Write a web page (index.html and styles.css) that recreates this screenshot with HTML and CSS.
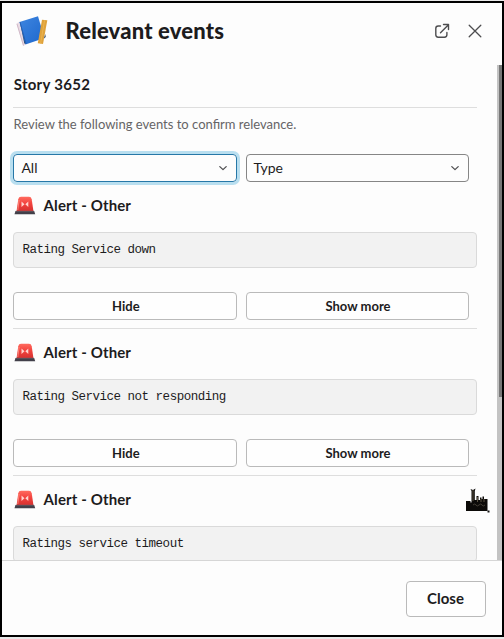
FILE: index.html
```html
<!DOCTYPE html>
<html lang="en">
<head>
<meta charset="utf-8">
<title>Relevant events</title>
<link rel="stylesheet" href="styles.css">
</head>
<body>
<svg class="defs" aria-hidden="true">
  <defs>
    <linearGradient id="lamp" x1="0" y1="0" x2="0" y2="1"><stop offset="0" stop-color="#ff6b5f"/><stop offset=".45" stop-color="#f3433e"/><stop offset="1" stop-color="#d5302f"/></linearGradient>
    <linearGradient id="book" x1="0" y1="0" x2="1" y2="1"><stop offset="0" stop-color="#3f86e0"/><stop offset="1" stop-color="#1c66cc"/></linearGradient>
    <symbol id="siren" viewBox="0 0 22 19">
      <path d="M2.500 15.500 4.300 3.200Q4.700 .8 7 .8H15Q17.200 .8 17.700 3.200L19.500 15.500Z" fill="url(#lamp)"/>
      <path d="M5.100 4 3.800 14" stroke="#ff9388" stroke-width=".8"/>
      <path d="M7.500 5.500 10.500 8.200 7.500 11ZM14.300 5.500 11.300 8.200 14.300 11Z" fill="#ffd5cf"/>
      <path d="M1.500 15H20.200L21.200 18.300H.5Z" fill="#42404a"/>
      <path d="M1.800 15.200H20" stroke="#77616a" stroke-width=".7"/>
    </symbol>
    <symbol id="chevron" viewBox="0 0 10 7"><path d="m1.800 1.600 3.200 3 3.200-3" fill="none" stroke="#4f4f51" stroke-width="1.300" stroke-linecap="round" stroke-linejoin="round"/></symbol>
  </defs>
</svg>
<div class="modal">
  <header class="head">
    <svg class="books" viewBox="0 0 34 34">
      <path d="M1.500 8.500 4.800 6.500 11 29.500 8 31z" fill="#eadde5"/>
      <path d="M2 9 8.500 30.500" stroke="#c9afc0" stroke-width=".8"/>
      <path d="M5 7.500 9.300 28.500 11 29 6 7z" fill="#28466f"/>
      <path d="M4.500 7 23 1.200 29.500 23 10.500 29.500z" fill="url(#book)"/>
      <path d="m5 7 6 22" stroke="#2058a8" stroke-width=".8"/>
      <path d="m27 4.700 5.300.6-4.300 23.700-5.200-.8z" fill="#dfa23b"/>
      <path d="m29.600 5.200-4 23.200" stroke="#ebb450" stroke-width="1"/>
      <path d="m30.200 19 .5 3-1.700 1.500z" fill="#29415f"/>
    </svg>
    <h1>Relevant events</h1>
    <svg class="open" viewBox="0 0 16 16"><path d="M6.500 3H4.200Q1.800 3 1.800 5.400v6.400q0 2.400 2.400 2.400h6.300q2.400 0 2.400-2.400V9.500M6.500 9.700 14 2.200M9.500 1.500h5v5" fill="none" stroke="#4d4d4f" stroke-width="1.400" stroke-linecap="round" stroke-linejoin="round"/></svg>
    <svg class="close-x" viewBox="0 0 14 14"><path d="m1.200 1.200 11.600 11.600m0-11.600L1.200 12.800" stroke="#4d4d4f" stroke-width="1.300" stroke-linecap="round"/></svg>
  </header>
  <main class="content">
    <div class="inner">
      <h2>Story 3652</h2>
      <p class="hint"><span>Review the following events to confirm relevance.</span></p>
      <div class="pair filters">
        <div class="select focused"><span>All</span><svg><use href="#chevron"/></svg></div>
        <div class="select"><span>Type</span><svg><use href="#chevron"/></svg></div>
      </div>
      <section class="event">
        <h3><svg><use href="#siren"/></svg><span>Alert - Other</span></h3>
        <pre>Rating Service down</pre>
        <div class="pair"><button>Hide</button><button>Show more</button></div>
      </section>
      <section class="event">
        <h3><svg><use href="#siren"/></svg><span>Alert - Other</span></h3>
        <pre>Rating Service not responding</pre>
        <div class="pair"><button>Hide</button><button>Show more</button></div>
      </section>
      <section class="event">
        <h3><svg><use href="#siren"/></svg><span>Alert - Other</span></h3>
        <pre>Ratings service timeout</pre>
      </section>
    </div>
    <div class="track"><div class="thumb"></div></div>
  </main>
  <footer><button class="close">Close</button></footer>
</div>
<svg class="cursor" viewBox="0 0 24 26">
  <path d="M0 23V13H4.500V14.500H5.500V3L4.500 1 7 2 9.500 .5 8.800 3V12H10.500V8H12.500V12H14V9.500H15.500V11H16.500V8.500H18V11H21.500V23Z" fill="#0c0a08"/>
  <path d="M7 2V13M11.500 9v5M15 11v3M18 11v3" stroke="#6c6250" stroke-width=".8"/>
  <path d="M7 17q2-2 3 0t3 0 3 0 3 0" fill="none" stroke="#514a40" stroke-width=".8"/>
  <path d="M21.500 22.500h2v2h-2z" fill="#111"/>
</svg>
</body>
</html>
```
FILE: styles.css
```css
* { box-sizing: border-box; }
body {
  margin: 0;
  height: 639px;
  padding: 1px 0 2px;
  overflow: hidden;
  background: #e9e9e9;
  font-family: Lato, sans-serif;
  color: #1d1c1d;
}
h1, h2, h3, p, pre { margin: 0; }
svg { display: block; }
.defs { position: absolute; width: 0; height: 0; }
.modal {
  display: flex;
  flex-direction: column;
  height: 636px;
  border: 2px solid #000;
  background: #fdfdfd;
}
.head {
  display: flex;
  align-items: center;
  height: 62px;
  padding: 0 20px 6px 13px;
}
.books { width: 34px; height: 34px; margin-top: 1px; }
h1 {
  flex: 1;
  margin-left: 16.500px;
  font-size: 22px;
  line-height: 28px;
  font-weight: 900;
  letter-spacing: 0.18px;
  white-space: nowrap;
}
.open { width: 16px; height: 16px; margin-right: 18px; }
.close-x { width: 14px; height: 14px; }
.content { display: flex; height: 495px; overflow: hidden; }
.inner { width: 464px; margin-left: 11.400px; flex: none; }
h2 {
  height: 43px;
  padding: 9px 0 0 0.3px;
  border-bottom: 1px solid #dedede;
  font-size: 15px;
  line-height: 20px;
  letter-spacing: 0.3px;
}
.hint {
  height: 46px;
  padding: 7px 0 0 0.2px;
  font-size: 13px;
  line-height: 18px;
  color: #656466;
}
.pair {
  display: grid;
  grid-template-columns: 224px 223px;
  gap: 8.600px;
}
.select {
  display: flex;
  align-items: center;
  justify-content: space-between;
  height: 28px;
  padding: 0 8px 0 7px;
  border: 1px solid #868686;
  border-radius: 4px;
  font-size: 14px;
  line-height: 18px;
}
.select:last-child { padding-left: 6.500px; }
.select svg { width: 10px; height: 7px; }
.focused { border-color: #2778a8; box-shadow: 0 0 0 3px #b9dff0; }
.event { height: 147px; border-bottom: 1px solid #dedede; }
h3 {
  display: flex;
  align-items: center;
  height: 50px;
  padding-bottom: 4px;
  font-size: 15px;
  line-height: 20px;
  letter-spacing: 0.12px;
}
h3 svg { width: 22px; height: 19px; margin: 1px 7.800px 0 0.4px; }
pre {
  height: 36px;
  margin-bottom: 24px;
  padding: 8px;
  border: 1px solid #dadada;
  border-radius: 4px;
  background: #f2f2f2;
  font: 12.500px/18px "Liberation Mono", monospace;
  letter-spacing: -0.49px;
}
button {
  height: 28px;
  padding: 0 0 0 1px;
  border: 1px solid #bababa;
  border-radius: 4px;
  background: #fefefe;
  color: #1d1c1d;
  font: 700 13px/18px Lato, sans-serif;
}
.track { width: 5px; margin-left: auto; background: #c3c3c3; }
.thumb { width: 3px; height: 332px; margin-left: auto; background: #777; }
footer {
  display: flex;
  justify-content: flex-end;
  align-items: center;
  height: 75px;
  padding: 1px 16px 0 0;
  border-top: 1px solid #d6d6d6;
}
.close { width: 80px; height: 36px; padding: 0 1px 2px 0; font-size: 15px; }
.cursor { position: absolute; left: 466px; top: 488px; width: 24px; height: 26px; }
```
